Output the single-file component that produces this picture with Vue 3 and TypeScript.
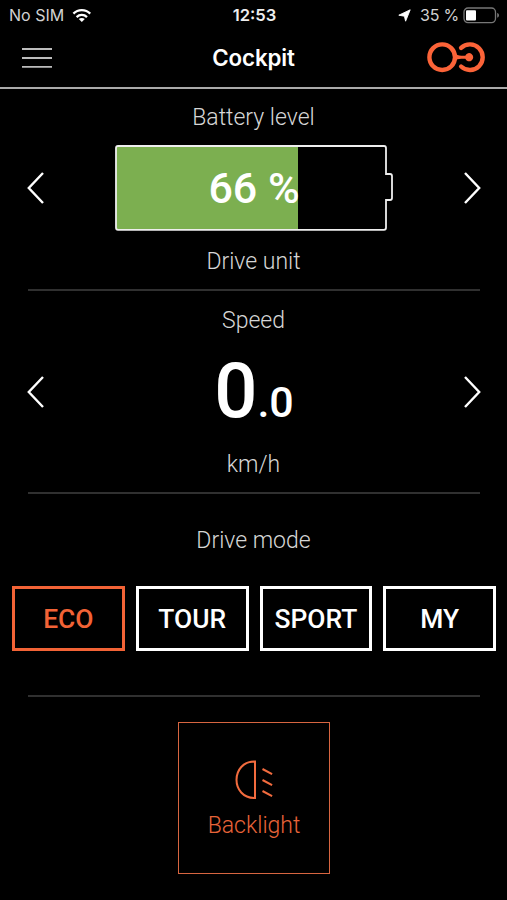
<script setup lang="ts">
import { ref } from 'vue'

const modes: string[] = ['ECO', 'TOUR', 'SPORT', 'MY']
const activeMode = ref('ECO')
const batteryLevel = ref(66)
</script>

<template>
  <main class="app">
    <div class="status">
      <div class="carrier">
        <span>No SIM</span>
        <svg width="20" height="15" viewBox="0 0 20 15" fill="none" stroke="#fff" stroke-width="2.3">
          <path d="M1.4 5.6C6 1 13.6 1 18.2 5.6M4.6 9.1c3-2.9 7.4-2.9 10.4 0" />
          <path d="M9.8 14 6.8 11c1.7-1.5 4.3-1.5 6 0z" fill="#fff" stroke="none" />
        </svg>
      </div>
      <strong class="clock">12:53</strong>
      <div class="power">
        <svg class="location" width="13" height="13" viewBox="0 0 13 13"><path d="M12.2.8 7.6 12.2 6.4 7.2.8 6.2z" fill="#fff" stroke="#fff" stroke-width=".9" stroke-linejoin="round" /></svg>
        <span>35 %</span>
        <svg class="cell" width="37" height="17" viewBox="0 0 37 17">
          <rect x="1" y="1" width="31.5" height="14.6" rx="4" fill="none" stroke="#777" stroke-width="1.3" />
          <rect x="3" y="3.2" width="10" height="10.4" rx="1" fill="#fff" />
          <path d="M34.2 6c2.4.7 2.4 4 0 4.7z" fill="#777" />
        </svg>
      </div>
    </div>

    <header class="header">
      <svg class="menu" width="30" height="22" viewBox="0 0 30 22" stroke="#bcbcbc" stroke-width="1.8"><path d="M0 2h30M0 11h30M0 19.8h30" /></svg>
      <h1>Cockpit</h1>
      <svg class="logo" width="58" height="31" viewBox="0 0 58 31" fill="none" stroke="#fb6338" stroke-width="4.4" stroke-linecap="round">
        <circle cx="15.2" cy="15.2" r="12.8" />
        <path d="M34.1 5.9A12.8 12.8 0 1 1 34.1 24.5" />
        <path d="M27.4 10.5c2 2.6 4 3.2 7 3.2h3.9a4.1 4.1 0 1 1 0 3h-3.9c-3 0-5 .6-7 3.2z" fill="#fb6338" stroke="none" />
      </svg>
    </header>

    <section class="panel">
      <p class="label battery-label">Battery level</p>
      <div class="reading level">
        <svg class="arrow" width="18" height="34" viewBox="0 0 18 34"><path d="M16 2 1.8 17 16 32" /></svg>
        <div class="battery">
          <div class="cell-body">
            <div class="charge" :style="{ width: batteryLevel + '%' }"></div>
            <strong>{{ batteryLevel }} %</strong>
          </div>
          <svg class="outline" width="280" height="88" viewBox="0 0 280 88">
            <path d="M4 2H270Q272 2 272 4V30H276Q278 30 278 32V54Q278 56 276 56H272V83.8Q272 85.8 270 85.8H4Q2 85.8 2 83.8V4Q2 2 4 2Z" />
          </svg>
        </div>
        <svg class="arrow" width="18" height="34" viewBox="0 0 18 34"><path d="M2 2 16.2 17 2 32" /></svg>
      </div>
      <p class="label unit-label">Drive unit</p>
    </section>

    <section class="panel speed">
      <p class="label speed-label">Speed</p>
      <div class="reading">
        <svg class="arrow" width="18" height="34" viewBox="0 0 18 34"><path d="M16 2 1.8 17 16 32" /></svg>
        <div class="velocity"><span class="whole">0</span><span class="decimal">.0</span></div>
        <svg class="arrow" width="18" height="34" viewBox="0 0 18 34"><path d="M2 2 16.2 17 2 32" /></svg>
      </div>
      <p class="label kmh-label">km/h</p>
    </section>

    <section class="panel drive">
      <p class="label mode-label">Drive mode</p>
      <div class="modes">
        <button v-for="mode in modes" :key="mode" :class="{ active: mode === activeMode }" @click="activeMode = mode">{{ mode }}</button>
      </div>
    </section>

    <button class="backlight">
      <svg width="38" height="40" viewBox="0 0 38 40" fill="none" stroke="#f26b3e" stroke-width="2">
        <path d="M20 1.5V38C8 38.5 1.5 29 1.5 19.8S8 1 20 1.5ZM27.5 9l9.6 5.2M27.5 20l9.6 5.2M27.5 31l9.6 5.2" />
      </svg>
      <span>Backlight</span>
    </button>
  </main>
</template>

<style>
body {
  margin: 0;
  background: #000;
}
</style>

<style scoped>
* {
  box-sizing: border-box;
}
.app {
  width: 507px;
  height: 900px;
  overflow: hidden;
  background: #000;
  color: #fff;
  font-family: Roboto, sans-serif;
}
svg {
  display: block;
  flex: none;
}
p, h1 {
  margin: 0;
}
button {
  padding: 0;
  background: none;
  font-family: inherit;
}
.status {
  display: grid;
  grid-template-columns: 1fr auto 1fr;
  align-items: center;
  height: 30px;
  padding: 0 7px 0 9px;
  font: 400 16px/30px Inter, sans-serif;
  color: #d2d2d2;
}
.carrier, .power {
  display: flex;
  align-items: center;
}
.carrier {
  gap: 8px;
}
.power {
  justify-content: flex-end;
  letter-spacing: -0.2px;
}
.location {
  margin-right: 9px;
}
.cell {
  margin-left: 4px;
}
.clock {
  font-weight: 600;
  font-size: 16.6px;
  color: #eee;
}
.header {
  display: grid;
  grid-template-columns: 1fr auto 1fr;
  align-items: center;
  height: 59px;
  padding: 0 22px 2px 22px;
  border-bottom: 2px solid #aaa;
}
.header h1 {
  font: 600 22.3px/30px Inter, sans-serif;
  letter-spacing: -0.1px;
}
.logo {
  justify-self: end;
}
.panel {
  display: flex;
  flex-direction: column;
  height: 202px;
  padding-top: 15px;
}
.panel::after {
  content: '';
  width: 452px;
  height: 2px;
  margin: auto auto 0 28px;
  background: #303030;
}
.speed, .drive {
  height: 203px;
}
.speed {
  padding-top: 16px;
}
.label {
  height: 28px;
  text-align: center;
  font-size: 23px;
  font-weight: 300;
  line-height: 28px;
  color: #d6d6d6;
}
.reading {
  display: flex;
  align-items: center;
  justify-content: space-between;
  height: 116px;
  padding: 0 26px 0 27px;
}
.level {
  padding-bottom: 5px;
}
.speed .reading {
  padding-bottom: 3px;
}
.arrow {
  fill: none;
  stroke: #fff;
  stroke-width: 2.4;
}
.battery {
  display: grid;
  width: 280px;
  height: 88px;
}
.cell-body, .outline {
  grid-area: 1 / 1;
}
.outline path {
  fill: none;
  stroke: #eee;
  stroke-width: 1.8;
}
.cell-body {
  display: grid;
  width: 276px;
  height: 84px;
  margin: 2px 0 0 2px;
}
.cell-body > * {
  grid-area: 1 / 1;
}
.charge {
  background: #7caf50;
}
.cell-body strong {
  justify-self: center;
  font-size: 43px;
  font-weight: 500;
  line-height: 84px;
}
.velocity {
  display: flex;
  align-items: baseline;
  padding-top: 10px;
  font-weight: 500;
  line-height: 100px;
}
.whole {
  font-size: 76px;
}
.decimal {
  font-size: 43px;
}
.drive {
  padding-top: 33px;
}
.modes {
  display: grid;
  grid-template-columns: repeat(4, 1fr);
  gap: 11px;
  height: 65px;
  margin: 31px 11px 0 12px;
}
.modes button {
  border: 3px solid #fff;
  color: #fff;
  font-size: 26.4px;
  font-weight: 500;
}
.modes .active {
  border-color: #f26336;
  color: #f26336;
}
.backlight {
  display: flex;
  flex-direction: column;
  align-items: center;
  width: 152px;
  height: 152px;
  margin: 25px 0 0 178px;
  padding-top: 37px;
  border: 1.5px solid #d76540;
  color: #e86439;
  font-size: 23px;
  font-weight: 300;
}
.backlight span {
  margin-top: 12px;
  line-height: 28px;
}
</style>
